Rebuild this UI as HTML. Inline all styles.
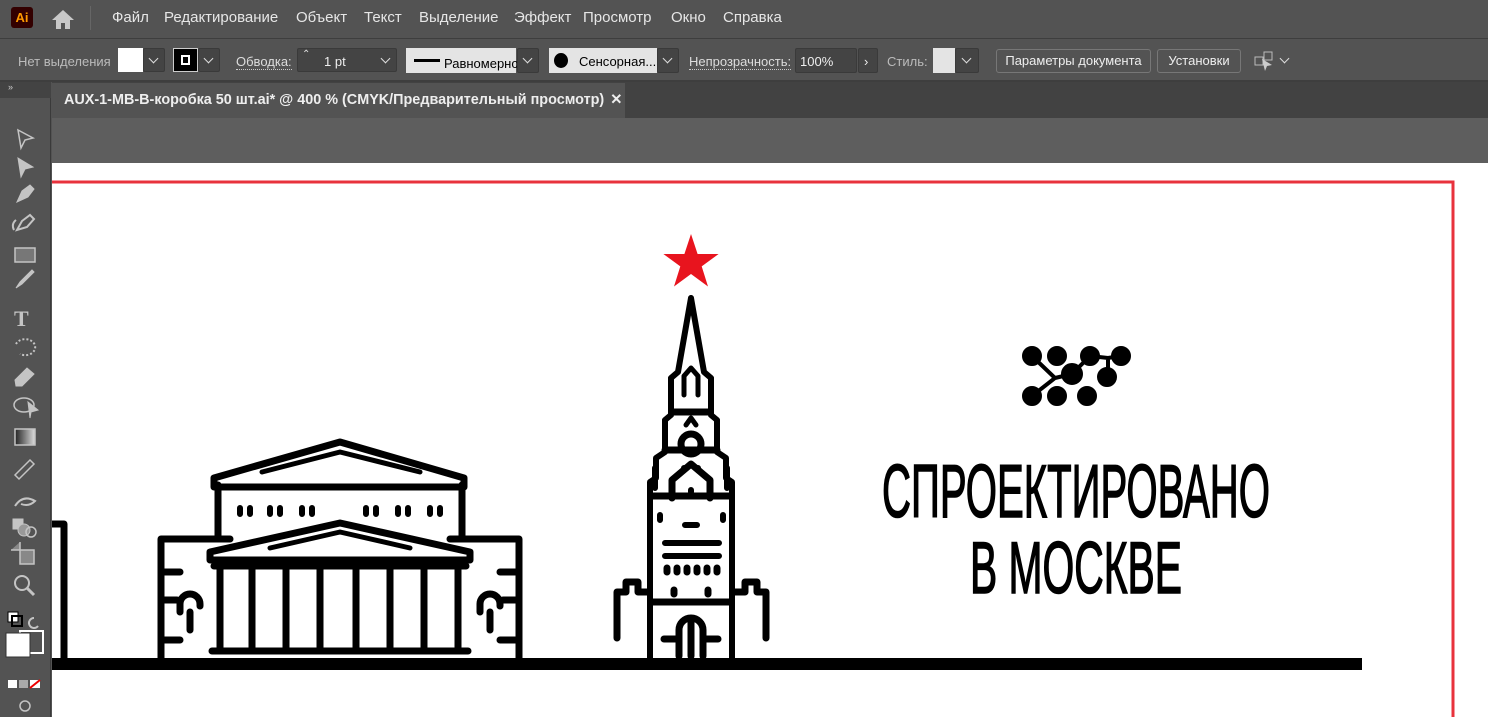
<!DOCTYPE html>
<html style="overflow:hidden"><head><meta charset="utf-8"><style>
*{margin:0;padding:0;box-sizing:border-box}
html,body{width:1488px;height:717px;overflow:hidden}
body{background:#535353;font-family:"Liberation Sans",sans-serif;position:relative}
.abs{position:absolute}
.menu{left:0;top:0;width:1488px;height:36px;background:#535353;color:#e6e6e6;font-size:15px}
.menu span{position:absolute;top:9px}
.tb{left:0;top:38px;width:1488px;height:44px;background:#535353;border-top:1px solid #3e3e3e;border-bottom:2px solid #3e3e3e;color:#d8d8d8;font-size:13px}
.tb .t{position:absolute;top:15px}
.box{position:absolute;background:#444;border:1px solid #3a3a3a;border-radius:2px}
.btn{position:absolute;border:1px solid #777;border-radius:3px;color:#eee;font-size:13px;text-align:center;line-height:22px;top:10px;height:24px;background:#535353}
.chev{position:absolute;width:7px;height:7px;border-right:1.6px solid #ddd;border-bottom:1.6px solid #ddd;transform:rotate(45deg)}
</style></head><body>
<div class="abs menu">
 <div class="abs" style="left:11px;top:7px;width:22px;height:21px;background:#300;border-radius:3px;color:#f90;font-weight:bold;font-size:13px;text-align:center;line-height:21px">Ai</div>
 <svg class="abs" style="left:50px;top:8px" width="26" height="22"><path d="M13 2 L2 12 H6 V21 H11 V15 H15 V21 H20 V12 H24 Z" fill="#c8c8c8"/></svg>
 <div class="abs" style="left:90px;top:6px;width:1px;height:24px;background:#666"></div>
 <span style="left:112px">Файл</span><span style="left:164px">Редактирование</span><span style="left:296px">Объект</span><span style="left:364px">Текст</span><span style="left:419px">Выделение</span><span style="left:514px">Эффект</span><span style="left:583px">Просмотр</span><span style="left:671px">Окно</span><span style="left:723px">Справка</span>
</div>
<div class="abs tb">
 <span class="t" style="left:18px;color:#bbb">Нет выделения</span>
 <div class="abs" style="left:118px;top:9px;width:25px;height:24px;background:#fff"></div>
 <div class="box" style="left:143px;top:9px;width:22px;height:24px"></div><div class="chev" style="left:150px;top:16px"></div>
 <div class="abs" style="left:173px;top:9px;width:25px;height:24px;background:#000;border:1px solid #ccc"><div class="abs" style="left:7px;top:6px;width:9px;height:10px;border:2px solid #fff"></div></div>
 <div class="box" style="left:198px;top:9px;width:22px;height:24px"></div><div class="chev" style="left:205px;top:16px"></div>
 <span class="t" style="left:236px;color:#ddd;border-bottom:1px dotted #ccc">Обводка:</span>
 <div class="box" style="left:297px;top:9px;width:100px;height:24px"></div>
 <span class="t" style="left:302px;top:10px;font-size:10px;color:#ddd">⌃</span>
 <span class="t" style="left:324px;color:#eee">1 pt</span><div class="chev" style="left:382px;top:16px"></div>
 <div class="abs" style="left:406px;top:9px;width:110px;height:25px;background:#e4e4e4"></div>
 <div class="abs" style="left:414px;top:20px;width:26px;height:3px;background:#000"></div>
 <span class="t" style="left:444px;top:17px;color:#000">Равномерно</span>
 <div class="box" style="left:517px;top:9px;width:22px;height:25px"></div><div class="chev" style="left:524px;top:16px"></div>
 <div class="abs" style="left:549px;top:9px;width:108px;height:25px;background:#e4e4e4"></div>
 <div class="abs" style="left:554px;top:14px;width:14px;height:15px;border-radius:50%;background:#000"></div>
 <span class="t" style="left:579px;top:15px;color:#000">Сенсорная...</span>
 <div class="box" style="left:657px;top:9px;width:22px;height:25px"></div><div class="chev" style="left:664px;top:16px"></div>
 <span class="t" style="left:689px;color:#ddd;border-bottom:1px dotted #ccc">Непрозрачность:</span>
 <div class="box" style="left:795px;top:9px;width:62px;height:25px"></div><span class="t" style="left:800px;color:#eee">100%</span>
 <div class="box" style="left:858px;top:9px;width:20px;height:25px"></div><span class="t" style="left:864px;color:#eee">›</span>
 <span class="t" style="left:887px;color:#bbb">Стиль:</span>
 <div class="abs" style="left:933px;top:9px;width:22px;height:25px;background:#e4e4e4"></div>
 <div class="box" style="left:955px;top:9px;width:24px;height:25px"></div><div class="chev" style="left:963px;top:16px"></div>
 <div class="btn" style="left:996px;width:155px">Параметры документа</div>
 <div class="btn" style="left:1157px;width:84px">Установки</div>
 <svg class="abs" style="left:1254px;top:12px" width="22" height="20"><rect x="1" y="6" width="8" height="8" fill="none" stroke="#bbb"/><rect x="10" y="1" width="8" height="8" fill="none" stroke="#bbb"/><path d="M8 8 L18 14 L13 15 L11 20Z" fill="#ccc"/></svg>
 <div class="chev" style="left:1281px;top:16px"></div>
</div>
<div class="abs" style="left:52px;top:82px;width:1436px;height:36px;background:#424242"></div>
<div class="abs" style="left:52px;top:83px;width:573px;height:35px;background:#535353;color:#eee;font-weight:bold;font-size:14.4px;line-height:35px;padding-left:12px;white-space:nowrap;overflow:hidden">AUX-1-MB-B-коробка 50 шт.ai* @ 400 % (CMYK/Предварительный просмотр) <span style="margin-left:2px">✕</span></div>
<div class="abs" style="left:52px;top:118px;width:1436px;height:45px;background:#5e5e5e"></div>
<div class="abs" style="left:52px;top:163px;width:1436px;height:554px;background:#fff"></div>
<div class="abs" style="left:0;top:82px;width:51px;height:635px;background:#535353;border-right:1px solid #3a3a3a"></div>
<div class="abs" style="left:0;top:82px;width:51px;height:16px;background:#434343;color:#ccc;font-size:9px;padding-left:8px">»</div>
<svg class="abs" style="left:0;top:118px" width="51" height="599" fill="#c4c4c4" stroke="#c4c4c4">
 <path d="M18 12 L33 20 L25 22 L21 30 Z" fill="none" stroke-width="1.5"/>
 <path d="M18 40 L33 49 L25 51 L21 59 Z"/>
 <path d="M17 84 L22 73 L30 67 L34 71 L28 79 Z" stroke-width="1"/>
 <path d="M17 112 L22 103 L30 97 L34 101 L27 109 Z M14 112 q-3 -6 2 -10" fill="none" stroke-width="2"/>
 <rect x="15" y="130" width="20" height="14" fill="#777" stroke-width="1.5"/>
 <path d="M16 170 L20 164 L32 152 L34 154 L22 166 Z" stroke-width="1"/>
 <text x="14" y="208" font-size="22" font-family="Liberation Serif" font-weight="bold" stroke="none">T</text>
 <path d="M16 226 a10 8 0 1 1 4 10" fill="none" stroke-width="2" stroke-dasharray="2 2"/>
 <path d="M15 262 L27 250 L34 256 L22 268 L16 268 Z" stroke-width="1"/>
 <ellipse cx="24" cy="287" rx="10" ry="7" fill="none" stroke-width="1.5"/><path d="M28 284 L38 292 L31 294 L30 300 Z"/>
 <rect x="15" y="311" width="20" height="16" fill="url(#g)" stroke-width="1.5"/>
 <defs><linearGradient id="g"><stop offset="0" stop-color="#222"/><stop offset="1" stop-color="#ddd"/></linearGradient></defs>
 <path d="M15 357 L30 342 L34 346 L19 361 Z" fill="none" stroke-width="1.5"/>
 <path d="M15 388 q8 -12 20 -5 q-6 6 -14 3" fill="none" stroke-width="2"/>
 <rect x="13" y="401" width="10" height="10"/><circle cx="24" cy="412" r="6" fill="#999"/><circle cx="31" cy="414" r="5" fill="none" stroke-width="1.5"/>
 <path d="M11 432 H20 V424 M20 432 H34 V446 H20 Z" fill="#888" stroke-width="1.5"/>
 <circle cx="22" cy="465" r="7" fill="none" stroke-width="2"/><path d="M27 470 L34 477" stroke-width="3"/>
 <rect x="8" y="494" width="10" height="10" fill="#fff" stroke="#000"/><rect x="12" y="498" width="10" height="10" fill="none" stroke="#000" stroke-width="2"/>
 <path d="M34 500 a5 5 0 1 0 4 8" fill="none" stroke-width="2"/>
 <rect x="20" y="513" width="23" height="22" fill="none" stroke="#fff" stroke-width="2"/><rect x="6" y="515" width="24" height="24" fill="#fff" stroke="#333"/>
 <rect x="8" y="562" width="9" height="8" fill="#fff" stroke="none"/><rect x="19" y="562" width="9" height="8" fill="#aaa" stroke="none"/><rect x="30" y="562" width="10" height="8" fill="#fff" stroke="none"/><path d="M30 570 L40 562" stroke="#e00" stroke-width="2"/>
 <circle cx="25" cy="588" r="5" fill="none" stroke-width="1.5"/>
</svg>
<svg class="abs" style="left:52px;top:163px;overflow:hidden" width="1436" height="554" viewBox="52 163 1436 554">
 <rect x="40" y="182" width="1413" height="600" fill="none" stroke="#e8323c" stroke-width="3"/>
 <rect x="52" y="658" width="1310" height="12" fill="#000"/>
 <g fill="none" stroke="#000" stroke-width="7" stroke-linecap="round" stroke-linejoin="round">
  <path d="M52 524 H64 V658"/>
  <path d="M161 658 V539 H230 M450 539 H519 V658"/>
  <path d="M163 572 H180 M163 600 H177 M163 640 H180 M517 572 H500 M517 600 H503 M517 640 H500"/>
  <path d="M180 612 v-8 a10 10 0 0 1 20 0 v2 M190 612 V630 M480 612 v-8 a10 10 0 0 1 20 0 v2 M490 612 V630"/>
  <path d="M218 536 V485 M462 536 V485"/>
  <path d="M214 487 V478 L340 442 L464 478 V487 Z"/>
  <path d="M262 472 L340 452 L420 472" stroke-width="5"/>
  <path d="M210 560 V552 L340 523 L470 552 V560 Z"/>
  <path d="M270 548 L340 532 L410 548" stroke-width="5"/>
  <path d="M214 566 H466 M212 651 H468"/>
  <path d="M220 568 V650 M252 568 V650 M286 568 V650 M320 568 V650 M356 568 V650 M390 568 V650 M424 568 V650 M458 568 V650"/>
  <path d="M240 508 v6 M250 508 v6 M270 508 v6 M280 508 v6 M302 508 v6 M312 508 v6 M366 508 v6 M376 508 v6 M398 508 v6 M408 508 v6 M430 508 v6 M440 508 v6" stroke-width="6"/>
  <path d="M691 298 L678 372 L671 378 V415 L665 420 V452 L656 458 V478 L650 482 V658 M691 298 L704 372 L711 378 V415 L717 420 V452 L726 458 V478 L732 482 V658" stroke-width="6"/>
  <path d="M684 376 L691 368 L698 376 V395 M684 376 V395" stroke-width="5"/>
  <path d="M672 412 H710 M665 450 H717"/>
  <circle cx="691" cy="444" r="10"/>
  <path d="M686 425 L691 418 L696 425" stroke-width="5"/>
  <path d="M684 468 h2 M696 468 h2" stroke-width="6"/>
  <path d="M652 496 H730 M652 602 H730"/>
  <path d="M672 498 V480 L691 464 L710 480 V498"/>
  <path d="M691 490 v2 M660 515 v5 M723 515 v5 M685 525 h12 M665 543 H719 M665 556 H719" stroke-width="6"/>
  <path d="M667 568 v4 M677 568 v4 M687 568 v4 M697 568 v4 M707 568 v4 M717 568 v4 M674 590 v4 M708 590 v4" stroke-width="7"/>
  <path d="M679 656 V630 a12 12 0 0 1 24 0 V656 M691 620 V656 M664 639 H679 M703 639 H718"/>
  <path d="M617 638 V592 H626 V582 H638 V592 H648 M766 638 V592 H757 V582 H745 V592 H734"/>
  <path d="M655 468 V488 M727 468 V488" stroke-width="6"/>
 </g>
 <path d="M691 234 L697.6 254 L718.6 254 L701.7 266.4 L708 286.5 L691 274 L674 286.5 L680.3 266.4 L663.4 254 L684.4 254 Z" fill="#e8141e"/>
 <g fill="#000" stroke="#000" stroke-width="4">
  <path d="M1032 356 L1055 378 L1032 396 M1055 378 L1072 374 L1090 356 L1108 358 L1120 356 M1108 358 V377" fill="none"/>
  <circle cx="1032" cy="356" r="8"/><circle cx="1057" cy="356" r="8"/><circle cx="1090" cy="356" r="8"/><circle cx="1121" cy="356" r="8"/>
  <circle cx="1072" cy="374" r="9"/><circle cx="1107" cy="377" r="8"/>
  <circle cx="1032" cy="396" r="8"/><circle cx="1057" cy="396" r="8"/><circle cx="1087" cy="396" r="8"/>
 </g>
 <text x="882" y="517" font-family="Liberation Sans Narrow, Liberation Sans, sans-serif" font-size="75" stroke="#000" stroke-width="1.6" textLength="388" lengthAdjust="spacingAndGlyphs">СПРОЕКТИРОВАНО</text>
 <text x="970" y="593" font-family="Liberation Sans Narrow, Liberation Sans, sans-serif" font-size="73" stroke="#000" stroke-width="1.6" textLength="212" lengthAdjust="spacingAndGlyphs">В МОСКВЕ</text>
</svg>
</body></html>
